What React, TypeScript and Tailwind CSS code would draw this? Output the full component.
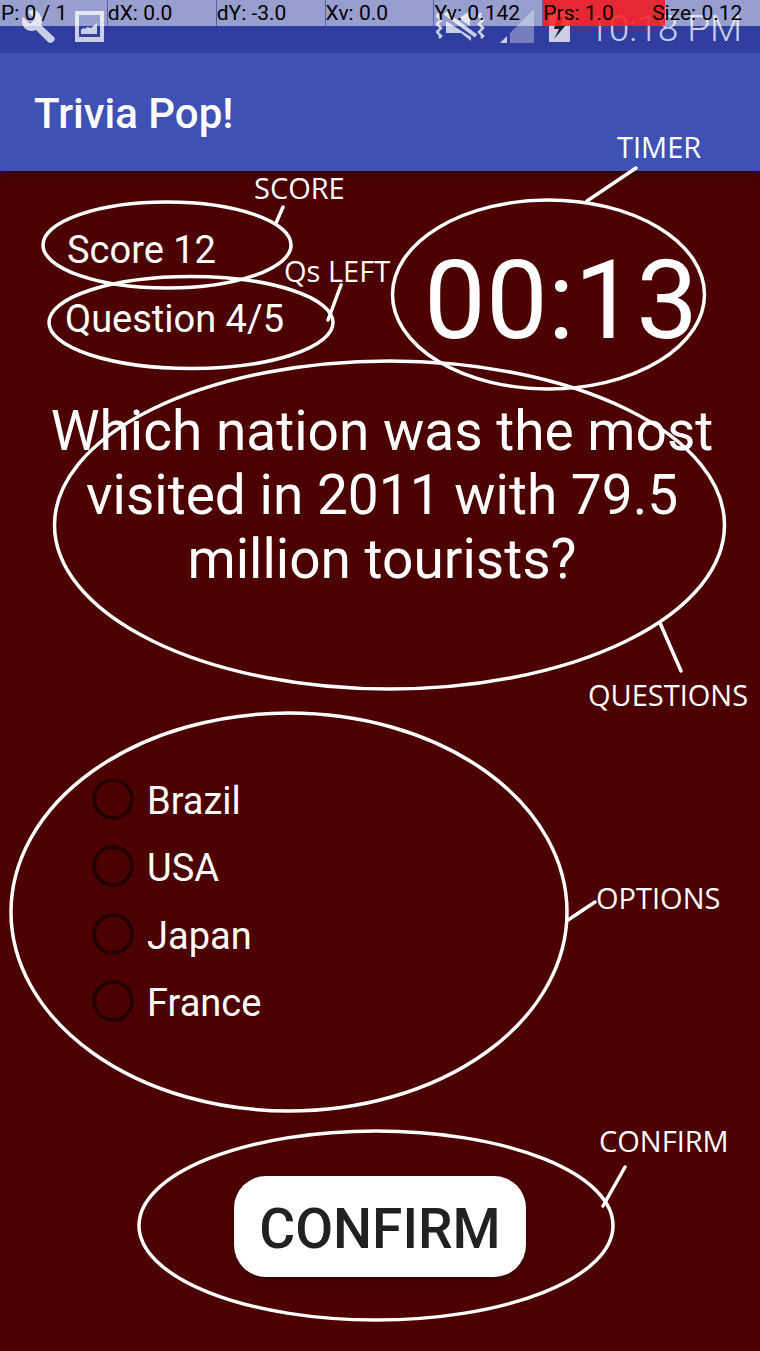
import { useState } from "react";

const readouts = [
  { text: "P: 0 / 1", level: 0 },
  { text: "dX: 0.0", level: 0 },
  { text: "dY: -3.0", level: 0 },
  { text: "Xv: 0.0", level: 0 },
  { text: "Yv: 0.142", level: 0 },
  { text: "Prs: 1.0", level: 100 },
  { text: "Size: 0.12", level: 12 },
];

const options = ["Brazil", "USA", "Japan", "France"];

function PointerBar() {
  return (
    <div className="absolute top-0 right-0 -left-0.5 grid h-[26px] grid-cols-7">
      {readouts.map((r, i) => (
        <div
          key={r.text}
          className={
            "relative bg-white/50 text-[21px] leading-[26px] whitespace-nowrap text-black " +
            (i > 0 ? "border-l border-[#5360b4] bg-clip-padding" : "pl-[3px]")
          }
        >
          <div
            className="absolute inset-y-0 left-0 bg-[#ff0000]/75"
            style={{ width: `${r.level}%` }}
          />
          <span className="relative">{r.text}</span>
        </div>
      ))}
    </div>
  );
}

function StatusBar() {
  return (
    <div className="relative flex h-[53px] items-start justify-between bg-[#303f9f] text-white/75">
      <div className="flex gap-5 pt-[10px] pl-[21px]">
        <svg width="34" height="34" viewBox="0 0 34 34" aria-hidden="true">
          <path
            fill="currentColor"
            d="M7 2 L14 9 L9 14 L2 7 C-1 13 3 21 11 21 C13 21 14 20 15 20 L27 32 C30 35 36 30 33 27 L20 15 C23 8 18 0 11 0 C9 0 8 1 7 2Z"
          />
        </svg>
        <svg width="29" height="33" viewBox="0 0 29 33" aria-hidden="true">
          <path
            fill="currentColor"
            fillRule="evenodd"
            d="M0 1H29V32H0Z M4 5V27H25V5Z M6 24V20L8 18L10 19L12 17L16 18L22 13V24Z"
          />
        </svg>
      </div>
      <div className="flex items-start pr-[18px]">
        <svg width="49" height="34" viewBox="0 0 49 34" className="mt-[9px] mr-[15px]" aria-hidden="true">
          <g fill="none" stroke="currentColor" strokeWidth="2.5">
            <path d="M3 4L1 7L5 11L1 15L5 19L1 23L5 27L3 29" />
            <path d="M45 4L43 7L47 11L43 15L47 19L43 23L47 27L45 29" />
            <path d="M9 4L40 27" strokeWidth="4" />
          </g>
          <path fill="currentColor" d="M10 12L35 28V32L25 24H10Z M23 9L34 2V17Z" />
        </svg>
        <svg width="34" height="34" viewBox="0 0 34 34" className="mt-[9px] mr-[15px]" aria-hidden="true">
          <path fill="currentColor" opacity="0.45" d="M34 0V34H10V24Z" />
          <path fill="currentColor" d="M0 34L7 27V34Z" />
        </svg>
        <svg width="21" height="32" viewBox="0 0 21 32" className="mt-[10px] mr-[18px]" aria-hidden="true">
          <path fill="currentColor" d="M0 3H6V0H15V3H21V32H0Z" />
          <path fill="#1a1f3c" d="M8 7L5 19H10L5 29L17 15H12L15 7Z" />
        </svg>
        <span className="pt-[7px] text-[37px] leading-[44px] font-light">10:18 PM</span>
      </div>
      <PointerBar />
    </div>
  );
}

function Annotations() {
  const label =
    "absolute font-['Open_Sans',sans-serif] text-[29px] leading-[40px] whitespace-nowrap";
  return (
    <div className="pointer-events-none absolute inset-0 text-white">
      <svg
        width="760"
        height="1351"
        viewBox="0 0 760 1351"
        className="absolute top-0 left-0"
        fill="none"
        stroke="currentColor"
        strokeWidth="3.5"
        strokeLinecap="round"
        aria-hidden="true"
      >
        <ellipse cx="167" cy="245" rx="124" ry="43" />
        <ellipse cx="191" cy="322.5" rx="142" ry="46" />
        <ellipse cx="548.5" cy="294.5" rx="156" ry="94.5" />
        <ellipse cx="389.5" cy="525" rx="335" ry="164" />
        <ellipse cx="289" cy="912" rx="278" ry="199" />
        <ellipse cx="376" cy="1225.5" rx="237" ry="94.5" />
        <path d="M283 207L276 223M341 285L328 320M636 168L587 201M660 623L681 671M595 902L568 920M625 1167L603 1206" />
      </svg>
      <span className={label + " top-[127px] left-[617px]"}>TIMER</span>
      <span className={label + " top-[168px] left-[254px]"}>SCORE</span>
      <span className={label + " top-[251px] left-[284px]"}>Qs LEFT</span>
      <span className={label + " top-[675px] left-[588px]"}>QUESTIONS</span>
      <span className={label + " top-[878px] left-[596px]"}>OPTIONS</span>
      <span className={label + " top-[1121px] left-[599px]"}>CONFIRM</span>
    </div>
  );
}

export default function App() {
  const [answer, setAnswer] = useState("");
  return (
    <div className="relative min-h-screen overflow-hidden bg-[#4c0000] font-[Roboto,sans-serif] text-white">
      <StatusBar />
      <header className="flex h-[118px] items-center bg-[#3f51b5] px-[34px] pt-1 shadow-[0_2px_8px_rgba(0,0,0,0.5)]">
        <h1 className="text-[42px] leading-[50px] font-medium">Trivia Pop!</h1>
      </header>

      <main>
        <section className="flex items-start justify-between pt-[56px] pr-[62px] pl-[65px]">
          <div className="text-[38px] leading-[46px]">
            <p className="pl-[2px]">Score 12</p>
            <p className="mt-[23px]">Question 4/5</p>
          </div>
          <time className="pt-[9px] text-[110px] leading-[130px]">00:13</time>
        </section>

        <h2 className="mt-[33px] pr-[36px] pl-10 text-center text-[55px] leading-[64px]">
          Which nation was the most visited in 2011 with 79.5 million tourists?
        </h2>

        <form onSubmit={(e) => e.preventDefault()}>
          <fieldset aria-label="Options" className="mt-[174px] grid h-[270px] grid-rows-4 pl-[92px]">
            {options.map((o) => (
              <label key={o} className="flex items-center gap-[13px] text-[38px] leading-[46px]">
                <input
                  type="radio"
                  name="answer"
                  value={o}
                  checked={answer === o}
                  onChange={() => setAnswer(o)}
                  className="size-[42px] appearance-none rounded-full border-4 border-[#250000] checked:bg-[#250000]"
                />
                <span className="pt-1">{o}</span>
              </label>
            ))}
          </fieldset>
          <div className="flex justify-center pt-[141px] pb-[73px]">
            <button
              type="submit"
              className="h-[101px] rounded-[32px] bg-white px-[25px] pt-1 text-[55px] leading-[64px] font-medium text-[#212121] shadow-[0_2px_4px_rgba(0,0,0,0.4)]"
            >
              CONFIRM
            </button>
          </div>
        </form>
      </main>
      <Annotations />
    </div>
  );
}
